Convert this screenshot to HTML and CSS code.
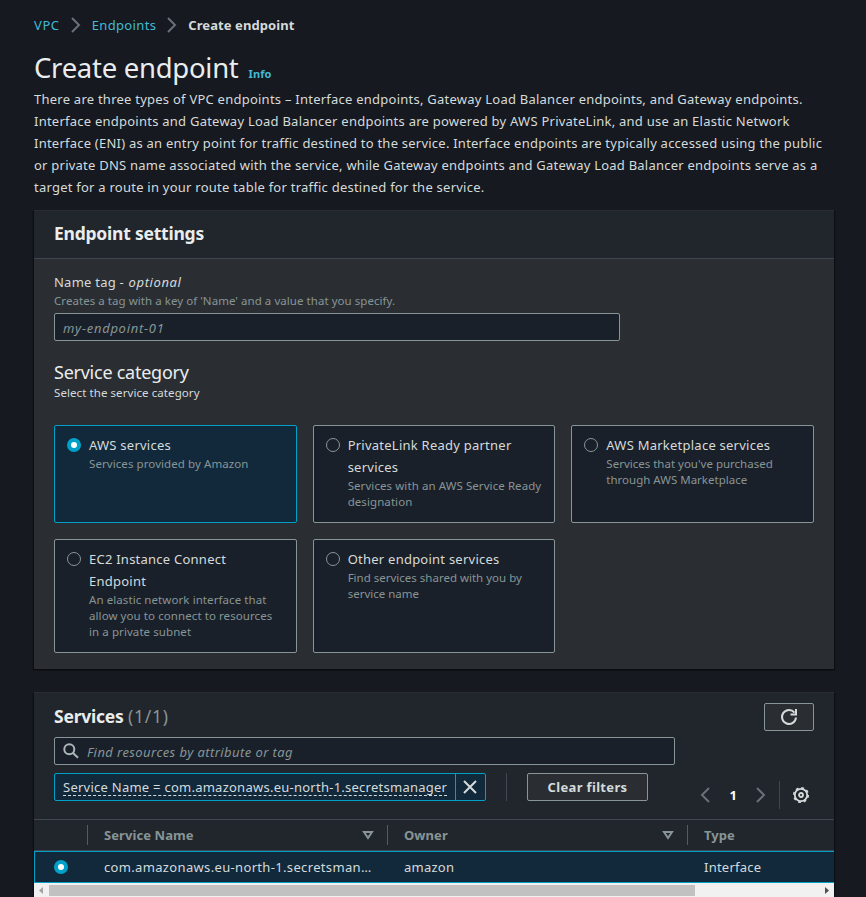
FILE: index.html
```html
<!DOCTYPE html>
<html lang="en">
<head>
<meta charset="utf-8">
<title>Create endpoint</title>
<link rel="stylesheet" href="styles.css">
</head>
<body>
<main class="page">
  <nav class="crumbs">
    <a class="c1">VPC</a>
    <svg class="sep" width="10" height="16" viewBox="0 0 10 16"><path d="M1 1l7 7-7 7"/></svg>
    <a class="c2">Endpoints</a>
    <svg class="sep" width="10" height="16" viewBox="0 0 10 16"><path d="M1 1l7 7-7 7"/></svg>
    <b class="c3">Create endpoint</b>
  </nav>
  <header class="title"><h1>Create endpoint</h1><a class="info">Info</a></header>
  <p class="intro">
    <span class="i1">There are three types of VPC endpoints – Interface endpoints, Gateway Load Balancer endpoints, and Gateway endpoints.</span>
    <span class="i2">Interface endpoints and Gateway Load Balancer endpoints are powered by AWS PrivateLink, and use an Elastic Network</span>
    <span class="i3">Interface (ENI) as an entry point for traffic destined to the service. Interface endpoints are typically accessed using the public</span>
    <span class="i4">or private DNS name associated with the service, while Gateway endpoints and Gateway Load Balancer endpoints serve as a</span>
    <span class="i5">target for a route in your route table for traffic destined for the service.</span>
  </p>

  <section class="panel settings">
    <h2 class="panel-head">Endpoint settings</h2>
    <div class="panel-body">
      <label class="name">Name tag - <i>optional</i></label>
      <div class="hint">Creates a tag with a key of 'Name' and a value that you specify.</div>
      <div class="input"><span class="ph1">my-endpoint-01</span></div>
      <h3>Service category</h3>
      <div class="sub">Select the service category</div>
      <div class="tiles">
        <div class="tile on"><span class="radio checked"></span><div><div class="t">AWS services</div><div class="d">Services provided by Amazon</div></div></div>
        <div class="tile"><span class="radio"></span><div><div class="t">PrivateLink Ready partner<br>services</div><div class="d">Services with an AWS Service Ready<br>designation</div></div></div>
        <div class="tile"><span class="radio"></span><div><div class="t">AWS Marketplace services</div><div class="d tight">Services that you've purchased<br>through AWS Marketplace</div></div></div>
        <div class="tile"><span class="radio"></span><div><div class="t">EC2 Instance Connect<br>Endpoint</div><div class="d">An elastic network interface that<br>allow you to connect to resources<br>in a private subnet</div></div></div>
        <div class="tile"><span class="radio"></span><div><div class="t">Other endpoint services</div><div class="d tight">Find services shared with you by<br>service name</div></div></div>
      </div>
    </div>
  </section>

  <section class="panel services">
    <div class="svc-head">
      <h2>Services <span class="count">(1/1)</span></h2>
      <button class="btn refresh"><svg width="18" height="18" viewBox="0 0 18 18"><path d="M16 9.500A7 7 0 1 1 14.500 4.600"/><path d="M16 1v5.500H10.500" /></svg></button>
    </div>
    <div class="search"><svg width="16" height="16" viewBox="0 0 16 16"><circle cx="6.300" cy="6.300" r="5"/><path d="M10 10l5 4.700"/></svg><span class="ph2">Find resources by attribute or tag</span></div>
    <div class="tools">
      <div class="token"><div class="token-label"><span>Service Name = com.amazonaws.eu-north-1.secretsmanager</span></div><div class="token-x"><svg width="14" height="14" viewBox="0 0 14 14"><path d="M1 1l12 12M13 1L1 13"/></svg></div></div>
      <span class="vline"></span>
      <button class="btn clear">Clear filters</button>
      <div class="pager">
        <svg class="sep" width="10" height="16" viewBox="0 0 10 16"><path d="M9 1L2 8l7 7"/></svg>
        <b>1</b>
        <svg class="sep" width="10" height="16" viewBox="0 0 10 16"><path d="M1 1l7 7-7 7"/></svg>
        <span class="vline"></span>
        <svg class="gear" width="18" height="18" viewBox="0 0 18 18"><circle cx="9" cy="9" r="6.200"/><circle class="teeth" cx="9" cy="9" r="7.300"/><circle cx="9" cy="9" r="2"/></svg>
      </div>
    </div>
    <div class="row thead">
      <div class="cell"></div>
      <div class="cell"><span class="h1c">Service Name</span><svg width="12" height="10" viewBox="0 0 12 10"><path d="M2 2h8L6 8z"/></svg></div>
      <div class="cell"><span class="h2c">Owner</span><svg width="12" height="10" viewBox="0 0 12 10"><path d="M2 2h8L6 8z"/></svg></div>
      <div class="cell"><span class="h3c">Type</span></div>
    </div>
    <div class="row data">
      <div class="cell"><span class="radio checked"></span></div>
      <div class="cell"><span class="d1">com.amazonaws.eu-north-1.secretsman…</span></div>
      <div class="cell"><span class="d2">amazon</span></div>
      <div class="cell"><span class="d3">Interface</span></div>
    </div>
    <div class="scroll"><svg width="15" height="15" viewBox="0 0 15 15"><path class="dim" d="M9 4v7L5 7.500z"/></svg><span class="thumb"></span><svg width="15" height="15" viewBox="0 0 15 15"><path d="M6 4v7l4-3.500z"/></svg></div>
  </section>
</main>
</body>
</html>
```
FILE: styles.css
```css
* { box-sizing: border-box; }
body { margin: 0; height: 897px; overflow: hidden; background: #16191f; color: #d5dbdb; font: 13px/22px "Noto Sans", sans-serif; letter-spacing: .24px; }
h1, h2, h3, p { margin: 0; }
svg { fill: none; stroke: #d5dbdb; stroke-width: 2; flex: none; display: block; }
span, b, a { white-space: nowrap; }
.page { width: 800px; margin-left: 34px; padding-top: 14px; }
.crumbs { display: flex; align-items: center; height: 22px; }
.crumbs .sep { margin: 0 11px; }
.c1 { letter-spacing: .6px; }
.c2 { letter-spacing: .35px; }
.c3 { letter-spacing: .08px; }
.sep { stroke: #687078; }
a { color: #44b9d6; }
.title { display: flex; align-items: baseline; height: 36px; margin-top: 14px; }
h1 { font-size: 27.500px; line-height: 36px; font-weight: 400; color: #eaeded; letter-spacing: -.28px; }
.info { font-size: 11px; font-weight: 700; margin-left: 10px; letter-spacing: .1px; }
.intro { margin-top: 2px; }
.intro span { display: block; width: max-content; }
.intro .i3, .intro .i4 { letter-spacing: .232px; }
.panel { background: #21252c; border-top: 1px solid #2a2e33; box-shadow: 0 1px 1px #0b0d10, 1px 1px 1px #0f1115, -1px 1px 1px #0f1115; }
.settings { margin-top: 12px; height: 459px; background: #2a2e33; }
.panel-head { background: #21252c; height: 48px; border-bottom: 1px solid #414750; padding: 11px 20px 0; }
h2 { font-size: 17.500px; line-height: 22px; color: #eaeded; font-weight: 700; letter-spacing: -.23px; }
.panel-body { padding: 12px 20px 0; }
.name { display: block; }
.name i { letter-spacing: .6px; margin-left: 1px; }
.hint, .d { font-size: 11.500px; line-height: 16px; color: #879596; letter-spacing: .08px; }
.hint { letter-spacing: .05px; }
.tight { letter-spacing: 0; }
.input, .search { border: 1px solid #879596; border-radius: 2px; background: #1a2029; color: #879596; font-style: italic; height: 28px; display: flex; align-items: center; }
.input { width: 566px; margin-top: 4px; padding: 2px 8px 0; letter-spacing: .72px; }
h3 { font-size: 18px; line-height: 22px; font-weight: 400; color: #eaeded; margin-top: 20px; letter-spacing: -.25px; }
.sub { font-size: 11.500px; line-height: 16px; margin-top: 2px; letter-spacing: .08px; }
.tiles { display: grid; grid-template-columns: repeat(3, 1fr); grid-template-rows: 98px 114px; gap: 16px; margin-top: 24px; }
.tile { display: flex; gap: 8px; padding: 8px 12px; border: 1px solid #879596; border-radius: 2px; background: #1a2029; white-space: nowrap; }
.tile.on { border-color: #00a1c9; background: #12293b; }
.radio { flex: none; width: 14px; height: 14px; border: 1px solid #879596; border-radius: 50%; margin-top: 4px; }
.radio.checked { border: 4px solid #00a1c9; background: #fff; }
.services { margin-top: 23px; height: 205px; }
.svc-head { display: flex; justify-content: space-between; padding: 10px 20px 0; }
.svc-head h2 { margin-top: 2px; }
.count { font-weight: 400; color: #879596; letter-spacing: .8px; }
.btn { height: 28px; border: 1px solid #879596; border-radius: 2px; background: #2a2e33; color: #d5dbdb; font: 700 13px "Noto Sans", sans-serif; letter-spacing: .34px; padding: 0; display: flex; align-items: center; justify-content: center; }
.refresh { width: 50px; }
.search { width: 621px; margin: 6px 0 0 20px; padding: 2px 0 0 8px; gap: 9px; letter-spacing: .42px; }
.search svg { stroke: #aab7b8; margin: -2px 0 0; }
.search span { margin-left: -1px; }
.tools { display: flex; height: 46px; margin: 8px 20px 0; }
.token { display: flex; width: 432px; height: 28px; border: 1px solid #00a1c9; border-radius: 2px; background: #12293b; }
.token-label { flex: 1; padding: 2px 8px 0; }
.token-label span { display: inline-block; line-height: 16px; border-bottom: 1px dashed #d5dbdb; letter-spacing: .252px; }
.token-x { width: 30px; border-left: 1px solid #00a1c9; display: flex; align-items: center; justify-content: center; padding-right: 1px; }
.vline { width: 1px; height: 28px; background: #414750; }
.tools > .vline { margin: 0 20px; }
.clear { width: 121px; }
.pager { display: flex; align-items: center; margin: 8px 4px 0 auto; height: 28px; }
.pager b { color: #fff; margin: 0 19px 0 20px; letter-spacing: 0; }
.pager .vline { margin: 0 12px 0 13px; }
.gear { stroke-width: 1.800; }
.gear .teeth { stroke-width: 1.500; stroke-dasharray: 2.867 2.867; }
.row { display: grid; grid-template-columns: 54px 300px 300px 1fr; height: 32px; }
.thead { border-top: 1px solid #414750; border-bottom: 1px solid #414750; color: #879596; font-weight: 700; align-items: center; letter-spacing: .08px; }
.cell { display: flex; align-items: center; justify-content: space-between; padding: 0 14px 0 16px; }
.thead .cell { height: 20px; border-left: 1px solid #545b64; }
.thead .cell:first-child { border-left: 0; }
.thead svg { stroke: #879596; }
.data { border: 1px solid #00a1c9; border-right: 0; background: #12293b; }
.data .cell { padding-left: 15px; }
.data .cell:first-child { padding-left: 19px; }
.d1 { letter-spacing: .34px; }
.data .radio { margin-top: 0; }
.thead .cell + .cell { margin-left: -1px; }
.scroll { display: flex; height: 15px; background: #f1f1f1; }
.scroll svg { stroke: none; fill: #505050; }
.scroll .dim { fill: #a3a3a3; }
.thumb { width: 646px; height: 11px; margin: 2px auto 0 0; background: #c1c1c1; }
```
